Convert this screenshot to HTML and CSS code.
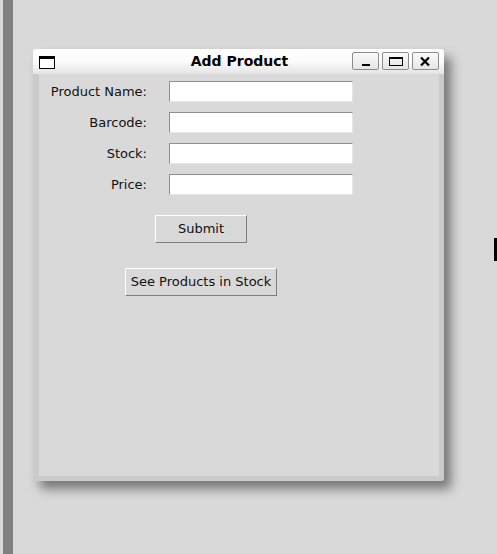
FILE: index.html
```html
<!DOCTYPE html>
<html>
<head>
<meta charset="utf-8">
<title>Add Product</title>
<link rel="stylesheet" href="styles.css">
</head>
<body>
<div class="strip"></div>
<div class="window">
  <div class="titlebar">
    <svg class="appicon" width="16" height="13" viewBox="0 0 16 13">
      <rect x="0.5" y="0.5" width="15" height="12" fill="#fff" stroke="#000"/>
      <rect x="0" y="0" width="16" height="3" fill="#000"/>
    </svg>
    <div class="title">Add Product</div>
    <div class="tbuttons">
      <div class="tbtn"><svg width="25" height="16" viewBox="0 0 25 16"><rect x="9" y="11" width="8" height="2" fill="#000"/></svg></div>
      <div class="tbtn"><svg width="25" height="16" viewBox="0 0 25 16"><rect x="6.5" y="4.5" width="13" height="8" fill="none" stroke="#000"/><rect x="6" y="4" width="14" height="2" fill="#000"/></svg></div>
      <div class="tbtn"><svg width="25" height="16" viewBox="0 0 25 16"><path d="M8 4.5 L16 12.5 M16 4.5 L8 12.5" stroke="#000" stroke-width="2.2"/></svg></div>
    </div>
  </div>
  <div class="content">
    <div class="form">
      <label class="lbl">Product Name:</label><div class="entry"></div>
      <label class="lbl">Barcode:</label><div class="entry"></div>
      <label class="lbl">Stock:</label><div class="entry"></div>
      <label class="lbl">Price:</label><div class="entry"></div>
    </div>
    <div class="actions">
      <div class="btn btn-submit">Submit</div>
      <div class="btn btn-see">See Products in Stock</div>
    </div>
  </div>
</div>
<div class="mark"></div>
</body>
</html>
```

FILE: styles.css
```css
html, body {
  margin: 0;
  padding: 0;
}
body {
  width: 497px;
  height: 554px;
  overflow: hidden;
  background: #d9d9d9;
  display: flex;
  align-items: flex-start;
  font-family: "DejaVu Sans", sans-serif;
  font-size: 13px;
  color: #111;
  position: relative;
}
.strip {
  width: 10px;
  height: 554px;
  margin-left: 3px;
  background: #808080;
  flex: none;
}
.window {
  margin-left: 20px;
  margin-top: 49px;
  width: 411px;
  height: 432px;
  flex: none;
  display: flex;
  flex-direction: column;
  border-radius: 3px 3px 2px 2px;
  background: #cbcbcb;
  box-shadow: 7px 8px 11px rgba(0,0,0,0.45);
  overflow: hidden;
}
.titlebar {
  height: 25px;
  flex: none;
  display: flex;
  align-items: center;
  padding: 0 5px 0 6px;
  background: linear-gradient(#ffffff 0%, #fbfbfb 50%, #e4e4e4 100%);
}
.appicon {
  flex: none;
  margin-top: 1px;
}
.title {
  flex: 1;
  text-align: center;
  font-weight: bold;
  font-size: 14px;
  color: #000;
  padding-left: 72px;
  margin-top: -1px;
  white-space: nowrap;
}
.tbuttons {
  display: flex;
  gap: 3px;
  margin-top: -1px;
}
.tbtn {
  width: 25px;
  height: 16px;
  border: 1px solid #8c8c8c;
  border-radius: 2px;
  background: linear-gradient(#fafafa, #e6e6e6);
}
.tbtn svg {
  display: block;
}
.content {
  flex: 1;
  margin: 0 5px 5px 6px;
  background: #d9d9d9;
  padding-top: 7px;
}
.form {
  display: grid;
  grid-template-columns: 108px 184px;
  column-gap: 22px;
  row-gap: 10px;
  align-items: center;
}
.lbl {
  text-align: right;
  white-space: nowrap;
  line-height: 21px;
}
.entry {
  height: 21px;
  box-sizing: border-box;
  background: #fff;
  border-top: 1px solid #8f8f8f;
  border-left: 1px solid #8f8f8f;
  border-bottom: 1px solid #e6e6e6;
  border-right: 1px solid #e6e6e6;
}
.actions {
  width: 324px;
  display: flex;
  flex-direction: column;
  align-items: center;
  gap: 25px;
  margin-top: 20px;
}
.btn {
  height: 28px;
  box-sizing: border-box;
  display: flex;
  align-items: center;
  justify-content: center;
  padding-bottom: 2px;
  background: #d9d9d9;
  border-top: 1px solid #ffffff;
  border-left: 1px solid #ffffff;
  border-bottom: 1px solid #7f7f7f;
  border-right: 1px solid #7f7f7f;
  color: #111;
}
.btn-submit {
  width: 92px;
}
.btn-see {
  width: 152px;
}
.mark {
  position: absolute;
  left: 494px;
  top: 238px;
  width: 3px;
  height: 23px;
  background: #000;
}
```
